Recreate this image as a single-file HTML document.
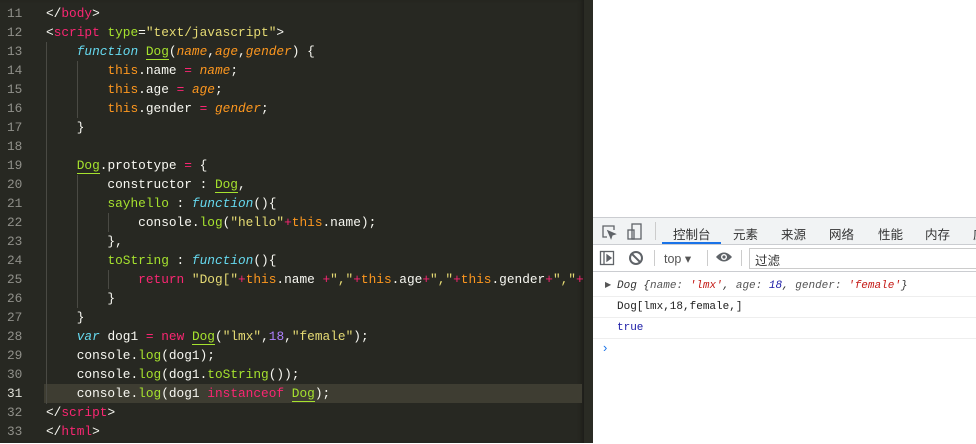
<!DOCTYPE html><html><head><meta charset="utf-8"><style>
body{margin:0;width:976px;height:443px;overflow:hidden;background:#fff;position:relative;font-family:"Liberation Sans","Noto Sans CJK SC",sans-serif}
#ed{position:absolute;left:0;top:0;width:584px;height:443px;background:#272822;box-shadow:inset -4px 0 4px -2px #1c1d18}
#sb{position:absolute;left:584px;top:0;width:9px;height:443px;background:#2a2b24}
.ln{position:absolute;left:0;width:40px;font:12.8px/19px "Liberation Mono",monospace;color:#90908a}
.ln div{padding-left:7px;height:19px}
.code{position:absolute;left:46px;top:4px;font:12.8px/19px "Liberation Mono",monospace;color:#f8f8f2}
.code div{height:19px;white-space:pre}
.hl{position:absolute;left:44px;top:384px;width:538px;height:19px;background:#3e3d32}
.g{position:absolute;width:1px;background:#4a4a44}
.t{color:#f92672}.a{color:#a6e22e}.s{color:#e6db74}.k{color:#66d9ef;font-style:italic}.p{color:#fd971f;font-style:italic}.th{color:#fd971f}.n{color:#ae81ff}.u{border-bottom:1px solid #a6e22e}
#dt{position:absolute;left:593px;top:217px;width:383px;height:226px;background:#fff;border-top:1px solid #cbcdd1}
.tb{height:26px;background:#f1f3f4;border-bottom:1px solid #cbcdd1;position:relative;font-size:12.5px;color:#333}
.tb span{position:absolute;top:6px}
.msg{font:11px/20px "Liberation Mono",monospace;padding-left:24px;border-bottom:1px solid #eee;height:20px;color:#1a1aa6}
</style></head><body>
<div id="ed"></div><div id="sb"></div>
<div class="hl"></div>
<div class="ln" style="top:4px"><div>11</div><div>12</div><div>13</div><div>14</div><div>15</div><div>16</div><div>17</div><div>18</div><div>19</div><div>20</div><div>21</div><div>22</div><div>23</div><div>24</div><div>25</div><div>26</div><div>27</div><div>28</div><div>29</div><div>30</div><div style="color:#e0e0d8">31</div><div>32</div><div>33</div></div>
<div class="g" style="left:46px;top:42px;height:362px"></div>
<div class="g" style="left:77px;top:61px;height:57px"></div>
<div class="g" style="left:77px;top:175px;height:133px"></div>
<div class="g" style="left:108px;top:213px;height:19px"></div>
<div class="g" style="left:108px;top:270px;height:19px"></div>
<div class="code"><div>&lt;/<span class="t">body</span>&gt;</div><div>&lt;<span class="t">script</span> <span class="a">type</span>=<span class="s">"text/javascript"</span>&gt;</div><div>    <span class="k">function</span> <span class="a u">Dog</span>(<span class="p">name</span>,<span class="p">age</span>,<span class="p">gender</span>) {</div><div>        <span class="th">this</span>.name <span class="t">=</span> <span class="p">name</span>;</div><div>        <span class="th">this</span>.age <span class="t">=</span> <span class="p">age</span>;</div><div>        <span class="th">this</span>.gender <span class="t">=</span> <span class="p">gender</span>;</div><div>    }</div><div></div><div>    <span class="a u">Dog</span>.prototype <span class="t">=</span> {</div><div>        constructor : <span class="a u">Dog</span>,</div><div>        <span class="a">sayhello</span> : <span class="k">function</span>(){</div><div>            console.<span class="a">log</span>(<span class="s">"hello"</span><span class="t">+</span><span class="th">this</span>.name);</div><div>        },</div><div>        <span class="a">toString</span> : <span class="k">function</span>(){</div><div>            <span class="t">return</span> <span class="s">"Dog["</span><span class="t">+</span><span class="th">this</span>.name <span class="t">+</span><span class="s">","</span><span class="t">+</span><span class="th">this</span>.age<span class="t">+</span><span class="s">","</span><span class="t">+</span><span class="th">this</span>.gender<span class="t">+</span><span class="s">","</span><span class="t">+</span></div><div>        }</div><div>    }</div><div>    <span class="k">var</span> dog1 <span class="t">=</span> <span class="t">new</span> <span class="a u">Dog</span>(<span class="s">"lmx"</span>,<span class="n">18</span>,<span class="s">"female"</span>);</div><div>    console.<span class="a">log</span>(dog1);</div><div>    console.<span class="a">log</span>(dog1.<span class="a">toString</span>());</div><div>    console.<span class="a">log</span>(dog1 <span class="t">instanceof</span> <span class="a u">Dog</span>);</div><div>&lt;/<span class="t">script</span>&gt;</div><div>&lt;/<span class="t">html</span>&gt;</div></div>
<div id="dt">
<div class="tb">
<svg style="position:absolute;left:8px;top:6px" width="16" height="16" viewBox="0 0 16 16" fill="none" stroke="#5f6368" stroke-width="1.3"><path d="M6 13H2V2h11v4"/><path d="M7 7l7 3-3 1-1 3z" fill="#5f6368"/></svg>
<svg style="position:absolute;left:34px;top:5px" width="16" height="17" viewBox="0 0 16 17" fill="none" stroke="#5f6368" stroke-width="1.3"><rect x="5" y="1" width="9" height="15"/><rect x="1" y="7" width="6" height="9"/></svg>
<div style="position:absolute;left:62px;top:4px;width:1px;height:18px;background:#ccc"></div>
<span style="left:80px">控制台</span><div style="position:absolute;left:69px;top:24px;width:59px;height:2px;background:#1a73e8"></div>
<span style="left:140px">元素</span><span style="left:188px">来源</span><span style="left:236px">网络</span><span style="left:285px">性能</span><span style="left:332px">内存</span><span style="left:380px">应</span>
</div>
<div class="tb" style="background:#fff">
<svg style="position:absolute;left:6px;top:5px" width="16" height="16" viewBox="0 0 16 16" fill="none" stroke="#5f6368" stroke-width="1.3"><rect x="1.5" y="1.5" width="13" height="13"/><path d="M5 1.5v13"/><path d="M8 5l4 3-4 3z" fill="#5f6368"/></svg>
<svg style="position:absolute;left:35px;top:5px" width="16" height="16" viewBox="0 0 16 16" fill="none" stroke="#5f6368" stroke-width="2"><circle cx="8" cy="8" r="6"/><path d="M4 4l8 8"/></svg>
<div style="position:absolute;left:61px;top:5px;width:1px;height:16px;background:#ccc"></div>
<span style="left:71px;color:#555">top ▾</span>
<div style="position:absolute;left:114px;top:5px;width:1px;height:16px;background:#ccc"></div>
<svg style="position:absolute;left:122px;top:5px" width="18" height="14" viewBox="0 0 18 14"><path d="M1 7Q9-2 17 7Q9 16 1 7z" fill="#5f6368"/><circle cx="9" cy="7" r="3" fill="#fff"/><circle cx="9" cy="7" r="1.6" fill="#5f6368"/></svg>
<div style="position:absolute;left:148px;top:5px;width:1px;height:16px;background:#ccc"></div>
<div style="position:absolute;left:156px;top:3px;width:230px;height:19px;border:1px solid #ccc;border-right:none"></div>
<span style="left:162px;top:5px">过滤</span>
</div>
<div style="height:4px"></div>
<div class="msg" style="color:#333;font-style:italic;position:relative"><span style="position:absolute;left:12px;font-style:normal;font-size:8px;color:#555">▶</span>Dog {<span style="color:#555">name:</span> <span style="color:#c41a16">'lmx'</span>, <span style="color:#555">age:</span> <span style="color:#1a1aa6">18</span>, <span style="color:#555">gender:</span> <span style="color:#c41a16">'female'</span>}</div>
<div class="msg" style="color:#222">Dog[lmx,18,female,]</div>
<div class="msg">true</div>
<div style="padding-left:10px;color:#1a73e8;font-size:13px;line-height:18px">›</div>
</div>
</body></html>
